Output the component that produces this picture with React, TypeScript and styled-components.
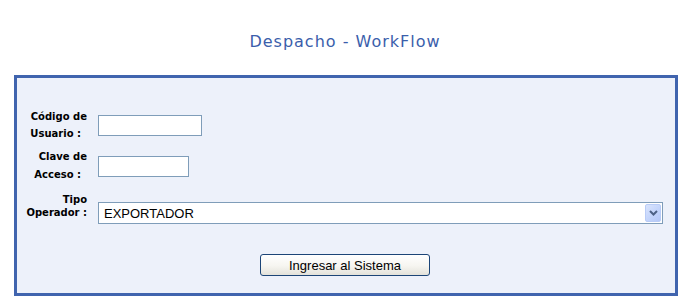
import React from "react";
import styled, { createGlobalStyle } from "styled-components";

const Global = createGlobalStyle`
  html, body { margin: 0; padding: 0; background: #ffffff; }
  body { font-family: "DejaVu Sans", Verdana, sans-serif; }
`;

const Page = styled.div`
  width: 681px;
  height: 302px;
  padding-top: 32px;
  box-sizing: border-box;
`;

const Title = styled.h1`
  margin: 0;
  height: 43px;
  font-family: "DejaVu Sans", Verdana, sans-serif;
  font-weight: normal;
  font-size: 16px;
  letter-spacing: 1px;
  line-height: 19px;
  color: #3b5eab;
  text-align: center;
  padding-left: 9px;
`;

const Panel = styled.div`
  margin-left: 14px;
  width: 664px;
  height: 221px;
  box-sizing: border-box;
  border: 3px solid #4064ae;
  background: #edf1fa;
  padding-top: 30px;
  display: flex;
  flex-direction: column;
`;

const Row = styled.div<{ $mt: number }>`
  display: flex;
  align-items: center;
  gap: 11px;
  margin-top: ${(p) => p.$mt}px;
`;

const Label = styled.div<{ $lh: number; $lift: number }>`
  width: 70px;
  text-align: right;
  font-family: "DejaVu Sans", Verdana, sans-serif;
  font-weight: bold;
  font-size: 10px;
  line-height: ${(p) => p.$lh}px;
  color: #000;
  margin-bottom: ${(p) => p.$lift}px;
`;

const Line = styled.span<{ $inset?: number }>`
  display: block;
  padding-right: ${(p) => p.$inset ?? 0}px;
  white-space: nowrap;
`;

const TextInput = styled.input<{ $w: number }>`
  width: ${(p) => p.$w}px;
  height: 21px;
  box-sizing: border-box;
  border: 1px solid #7f9db9;
  background: #fff;
  padding: 0 3px;
  margin: 0;
  outline: none;
  font-family: "Liberation Sans", Arial, sans-serif;
  font-size: 13px;
`;

const SelectBox = styled.div`
  width: 565px;
  height: 22px;
  box-sizing: border-box;
  border: 1px solid #7f9db9;
  background: #fff;
  display: flex;
  align-items: center;
  justify-content: space-between;
  padding: 0 1px 0 5px;
`;

const SelectText = styled.span`
  font-family: "Liberation Sans", Arial, sans-serif;
  font-size: 13px;
  color: #000;
`;

const DropButton = styled.div`
  width: 16px;
  height: 18px;
  box-sizing: border-box;
  border: 1px solid #b9ccf7;
  border-radius: 2px;
  background: linear-gradient(135deg, #d9e4fd 0%, #c3d4fb 55%, #b5c8f7 100%);
  display: flex;
  align-items: center;
  justify-content: center;
`;

const ButtonRow = styled.div`
  display: flex;
  justify-content: center;
  margin-top: 21px;
`;

const Button = styled.button`
  width: 170px;
  height: 22px;
  box-sizing: border-box;
  border: 1px solid #1c4577;
  border-radius: 3px;
  background: linear-gradient(180deg, #ffffff 0%, #f6f5f0 55%, #e3e2da 100%);
  font-family: "Liberation Sans", Arial, sans-serif;
  font-size: 13px;
  color: #000;
  padding: 0;
  margin-right: 2px;
`;

export default function App() {
  return (
    <Page>
      <Global />
      <Title>Despacho - WorkFlow</Title>
      <Panel>
        <Row $mt={0}>
          <Label $lh={17} $lift={0}>
            <Line>Código de</Line>
            <Line $inset={6}>Usuario :</Line>
          </Label>
          <TextInput $w={104} />
        </Row>
        <Row $mt={6}>
          <Label $lh={18} $lift={0}>
            <Line>Clave de</Line>
            <Line $inset={6}>Acceso :</Line>
          </Label>
          <TextInput $w={91} />
        </Row>
        <Row $mt={9}>
          <Label $lh={13} $lift={14}>
            <Line>Tipo</Line>
            <Line>Operador :</Line>
          </Label>
          <SelectBox>
            <SelectText>EXPORTADOR</SelectText>
            <DropButton>
              <svg width="9" height="6" viewBox="0 0 9 6">
                <path d="M1 1 L4.5 4.5 L8 1" fill="none" stroke="#4d6185" strokeWidth="2" />
              </svg>
            </DropButton>
          </SelectBox>
        </Row>
        <ButtonRow>
          <Button>Ingresar al Sistema</Button>
        </ButtonRow>
      </Panel>
    </Page>
  );
}
